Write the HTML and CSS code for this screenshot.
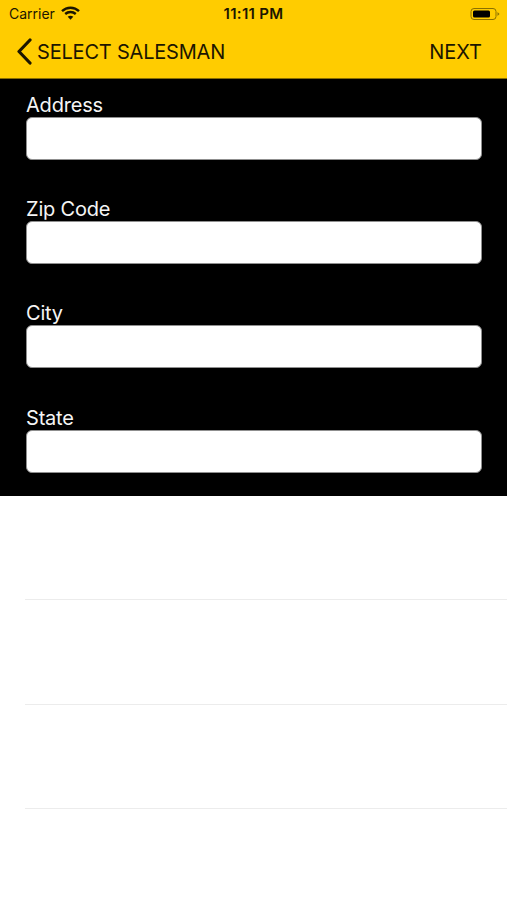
FILE: index.html
```html
<!DOCTYPE html>
<html lang="en">
<head>
<meta charset="utf-8">
<title>Address</title>
<link rel="stylesheet" href="styles.css">
</head>
<body>
<header class="header">
  <div class="status">
    <div class="status-left">
      <span class="carrier">Carrier</span>
      <svg class="wifi" width="19" height="14" viewBox="0 0 19 14"><path d="M1 5.2C5.8.6 13.2.6 18 5.2" class="arc"/><path d="M4.2 8C7.2 5.300 11.800 5.300 14.800 8" class="arc"/><path d="M9.500 13.800 6.700 10.700C8.300 9.300 10.700 9.300 12.300 10.700Z" class="dot"/></svg>
    </div>
    <span class="time">11:11 PM</span>
    <div class="status-right">
      <svg class="battery" width="31" height="14" viewBox="0 0 31 14"><rect x="1" y="1.500" width="25" height="11" rx="3" class="batt-shell"/><rect x="3" y="3.500" width="17" height="7" rx="1.500" class="batt-fill"/><path d="M27.500 5v4l2-2z" class="batt-tip"/></svg>
    </div>
  </div>
  <nav class="nav">
    <div class="back">
      <svg class="chevron" width="16" height="27" viewBox="0 0 16 27"><path d="M14 2 3 13.500 14 25"/></svg>
      <span class="back-text">SELECT SALESMAN</span>
    </div>
    <span class="next">NEXT</span>
  </nav>
</header>
<main class="form">
  <div class="field"><label class="label">Address</label><div class="input"></div></div>
  <div class="field"><label class="label">Zip Code</label><div class="input"></div></div>
  <div class="field"><label class="label">City</label><div class="input"></div></div>
  <div class="field"><label class="label">State</label><div class="input"></div></div>
</main>
<section class="rows">
  <div class="row"></div>
  <div class="row"></div>
  <div class="row"></div>
</section>
</body>
</html>
```
FILE: styles.css
```css
* { box-sizing: border-box; }
html, body { margin: 0; padding: 0; }
body {
  width: 507px;
  height: 900px;
  overflow: hidden;
  background: #fff;
  font-family: Inter, "Liberation Sans", sans-serif;
}
.header {
  height: 79px;
  background: #ffcc00;
  color: #1c1600;
  border-bottom: 1px solid #8a6f00;
}
.status {
  height: 27px;
  display: grid;
  grid-template-columns: 1fr auto 1fr;
  align-items: center;
  padding: 0 6px 0 9px;
}
.status-left { display: flex; align-items: center; gap: 6px; }
.status-right { display: flex; justify-content: flex-end; }
.carrier { font-size: 14px; }
.wifi { margin-top: -2px; }
.arc { fill: none; stroke: #1c1600; stroke-width: 2.400; }
.dot { fill: #1c1600; }
.time {
  font-size: 15px;
  font-weight: 600;
  letter-spacing: 0.3px;
  margin-right: 3px;
}
.batt-shell { fill: none; stroke: #8a7000; stroke-width: 1; }
.batt-fill { fill: #000; }
.batt-tip { fill: #8a7000; }
.nav {
  height: 51px;
  display: flex;
  align-items: center;
  justify-content: space-between;
  padding: 0 25px 2px 16px;
  font-size: 20px;
}
.back { display: flex; align-items: center; gap: 5px; }
.back-text { letter-spacing: -0.2px; }
.chevron { fill: none; stroke: #1c1600; stroke-width: 3.200; stroke-linecap: round; stroke-linejoin: round; }
.form {
  height: 417px;
  background: #000;
  padding: 14px 25px 0 26px;
  display: flex;
  flex-direction: column;
  gap: 22px;
}
.field { height: 82.200px; display: flex; flex-direction: column; }
.label {
  height: 24px;
  color: #f5f5f5;
  font-size: 20px;
  line-height: 24px;
  letter-spacing: -0.2px;
}
.input {
  height: 43px;
  background: #fff;
  border: 1px solid #8f8f8f;
  border-radius: 6px;
}
.rows { padding-left: 25px; }
.row { height: 104.250px; border-bottom: 1px solid #ececec; }
```
